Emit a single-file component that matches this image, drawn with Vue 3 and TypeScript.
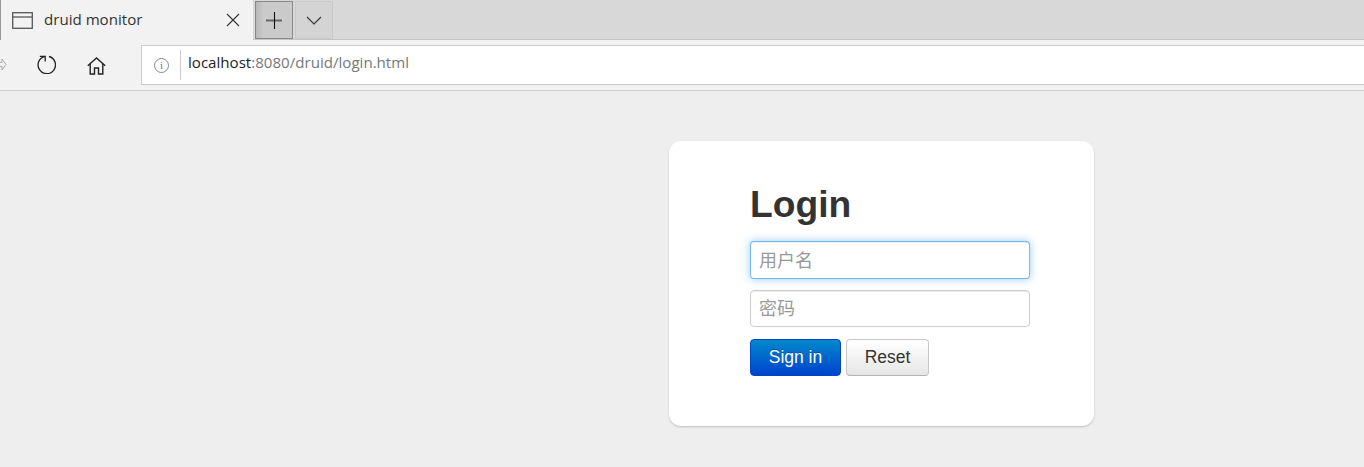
<script setup lang="ts">
const userPlaceholder = '用户名'
const passPlaceholder = '密码'
</script>

<template>
  <div class="browser">
    <div class="tabbar">
      <div class="tab">
        <svg class="tab-icon" width="21" height="17" viewBox="0 0 21 17" fill="none" stroke="#555" stroke-width="1.3">
          <rect x="0.7" y="0.7" width="19.600" height="15.600" />
          <path d="M1 5h19" />
        </svg>
        <span class="tab-title">druid monitor</span>
        <svg class="tab-close" width="14" height="14" viewBox="0 0 14 14" fill="none" stroke="#333" stroke-width="1.1">
          <path d="M1 1l12 12M13 1L1 13" />
        </svg>
      </div>
      <div class="tab-btn tab-btn-new">
        <svg width="18" height="18" viewBox="0 0 18 18" fill="none">
          <path d="M1 9.500h16" stroke="#666" stroke-width="2" />
          <path d="M9.500 1v17" stroke="#111" stroke-width="1.1" />
        </svg>
      </div>
      <div class="tab-btn tab-btn-more">
        <svg width="16" height="9" viewBox="0 0 16 9" fill="none" stroke="#333" stroke-width="1.1">
          <path d="M1 1l7 7 7-7" />
        </svg>
      </div>
    </div>

    <div class="toolbar">
      <svg class="forward" width="7" height="13" viewBox="0 0 7 13" fill="none" stroke="#aaa" stroke-width="1">
        <path d="M-4 4.500h6V1l4 5.500-4 5.500V8.500h-6" />
      </svg>
      <svg class="refresh" width="20" height="21" viewBox="0 0 20 21" fill="none" stroke="#222" stroke-width="1.3">
        <path d="M13 3.500a8.700 8.700 0 1 1-4 -.1" />
        <path d="M3.800 3.300h5.400v5.200" />
      </svg>
      <svg class="home" width="19" height="18" viewBox="0 0 19 18" fill="none" stroke="#222" stroke-width="1.4">
        <path d="M.8 8.800L9.500 1l8.700 7.800" />
        <path d="M3.200 7v10h4.300v-6h4v6h4.300V7" />
      </svg>
      <div class="address">
        <span class="info">i</span>
        <span class="address-sep" />
        <span class="url"><span class="url-host">localhost</span>:8080/druid/login.html</span>
      </div>
    </div>

    <main class="page">
      <form class="card" @submit.prevent>
        <h2 class="heading">Login</h2>
        <input class="field field-focus" type="text" :placeholder="userPlaceholder" />
        <input class="field" type="password" :placeholder="passPlaceholder" />
        <div class="actions">
          <button class="btn btn-primary" type="submit">Sign in</button>
          <button class="btn btn-default" type="button">Reset</button>
        </div>
      </form>
    </main>
  </div>
</template>

<style>
html,
body {
  margin: 0;
  background: #eee;
}
</style>

<style scoped>
.browser {
  width: 1364px;
  height: 467px;
  overflow: hidden;
  display: flex;
  flex-direction: column;
  font-family: "Liberation Sans", "Noto Sans CJK SC", sans-serif;
}

.tabbar {
  height: 40px;
  flex: none;
  display: flex;
  align-items: stretch;
  background: #d8d8d8;
  box-shadow: inset 0 -1px 0 #c4c4c4;
}

.tab {
  width: 253px;
  margin-right: 2px;
  display: flex;
  align-items: center;
  background: #f2f2f2;
  border-left: 1px solid #999;
  box-sizing: border-box;
  padding-left: 11px;
}

.tab-title {
  margin-left: 11px;
  margin-bottom: 2px;
  font-family: "Open Sans", "Liberation Sans", sans-serif;
  font-size: 15.100px;
  color: #333;
  width: 182px;
}

.tab-btn {
  width: 38px;
  height: 38px;
  margin-top: 1px;
  display: flex;
  align-items: center;
  justify-content: center;
  box-sizing: border-box;
}

.tab-btn-new {
  background: linear-gradient(90deg, #b8b8b8, #cacaca 20%, #cacaca);
  border: 1px solid #888;
  margin-right: 2px;
}

.tab-btn-more {
  background: #d4d4d4;
  border: 1px solid #c9c9c9;
}

.toolbar {
  height: 50px;
  flex: none;
  display: flex;
  align-items: center;
  background: #f2f2f2;
  border-bottom: 1px solid #ccc;
}

.forward {
  margin-top: -2px;
}

.refresh {
  margin-left: 29px;
  margin-top: -3px;
}

.home {
  margin-left: 31px;
  margin-top: 1px;
}

.address {
  margin-left: 35px;
  flex: 1;
  height: 40px;
  display: flex;
  align-items: center;
  background: #fff;
  border: 1px solid #ccc;
  border-right: none;
  box-sizing: border-box;
}

.info {
  width: 13px;
  height: 13px;
  margin-left: 12px;
  border: 1px solid #888;
  border-radius: 50%;
  font-family: "Liberation Serif", serif;
  font-size: 11px;
  line-height: 13px;
  text-align: center;
  color: #777;
}

.address-sep {
  width: 1px;
  height: 30px;
  margin-left: 11px;
  background: #ccc;
}

.url {
  margin-left: 7px;
  margin-bottom: 6px;
  font-family: "Open Sans", "Liberation Sans", sans-serif;
  font-size: 15.100px;
  color: #777;
}

.url-host {
  color: #222;
}

.page {
  flex: 1;
  background: #eee;
  padding-top: 50px;
  padding-left: 669px;
}

.card {
  width: 425px;
  height: 285px;
  box-sizing: border-box;
  padding: 39px 64px 0 81px;
  background: #fff;
  border-radius: 12px;
  box-shadow: 0 1px 2px rgba(0, 0, 0, 0.2);
  display: flex;
  flex-direction: column;
}

.heading {
  margin: 0 0 12px;
  font-size: 37.200px;
  line-height: 48px;
  font-weight: 700;
  color: #333;
  height: 49px;
}

.field {
  width: 280px;
  height: 37px;
  margin: 0 0 12px;
  padding: 2px 8px 0;
  box-sizing: border-box;
  border: 1px solid #ccc;
  border-radius: 4px;
  font-family: "Liberation Sans", "Noto Sans CJK SC", sans-serif;
  font-size: 18px;
  background: #fff;
  outline: none;
  box-shadow: inset 0 1px 1px rgba(0, 0, 0, 0.075);
}

.field::placeholder {
  color: #999;
  opacity: 1;
}

.field-focus {
  height: 38px;
  margin-bottom: 11px;
  border-color: rgba(82, 168, 236, 0.8);
  box-shadow: inset 0 1px 1px rgba(0, 0, 0, 0.075), 0 0 8px rgba(82, 168, 236, 0.6);
}

.actions {
  display: flex;
  gap: 5px;
}

.btn {
  height: 37px;
  padding: 0;
  box-sizing: border-box;
  border-radius: 4px;
  font-family: "Liberation Sans", sans-serif;
  font-size: 17.500px;
  cursor: pointer;
}

.btn-primary {
  width: 91px;
  color: #fff;
  border: 1px solid #0044cc;
  background: linear-gradient(#0088cc, #0044cc);
  text-shadow: 0 -1px 0 rgba(0, 0, 0, 0.25);
}

.btn-default {
  width: 83px;
  color: #333;
  border: 1px solid #c8c8c8;
  border-bottom-color: #b3b3b3;
  background: linear-gradient(#ffffff, #e6e6e6);
  text-shadow: 0 1px 1px rgba(255, 255, 255, 0.75);
}
</style>
